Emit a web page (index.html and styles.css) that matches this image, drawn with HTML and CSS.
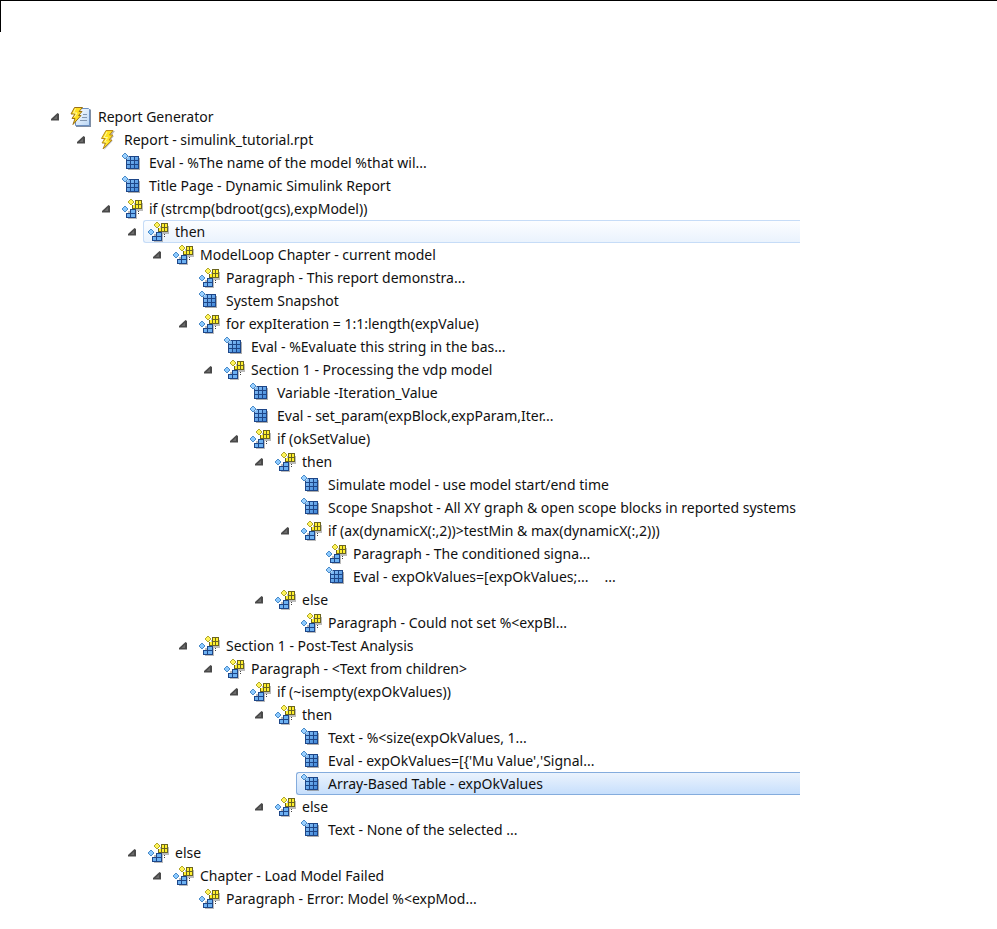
FILE: index.html
```
<!DOCTYPE html>
<html lang="en">
<head>
<meta charset="utf-8">
<title>Report Generator</title>
<link rel="stylesheet" href="styles.css">
</head>
<body>
<svg class="symbols" aria-hidden="true">
  <defs>
    <linearGradient id="page-fill" x2="1" y2="1"><stop stop-color="#fff"/><stop offset="1" stop-color="#b9d6f5"/></linearGradient>
    <linearGradient id="blue-fill" x2="1" y2="1"><stop stop-color="#8cc4f8"/><stop offset="1" stop-color="#3f86d8"/></linearGradient>
    <symbol id="arrow" viewBox="0 0 10 10"><path d="M7.500 1L9 2v6.500H1V7z" fill="#4a4a4a"/><path d="M7 3.500V7H3.500z" fill="#6c6c6c"/></symbol>
    <symbol id="bolt" viewBox="0 0 22 22">
      <path d="M10 2h8l-4 5h3l-4 4.500h3L7 21l2-6H6.500L9 10.500H6z" fill="#888" opacity=".6" transform="translate(1 0)"/>
      <path d="M10 1.500h7L13.500 6H17l-4 5h3L7 20l2.500-6H6l3-4.500H5.500z" fill="#ffe21f" stroke="#b88a1c"/>
      <path d="M11 3L8 8.500h3.500L8.500 13h3" fill="none" stroke="#fff7a0"/>
    </symbol>
    <symbol id="report" viewBox="0 0 22 22">
      <path d="M6 3h14l1 1v17H6z" fill="#7f8ea4"/>
      <path d="M5.500 2.500h13l1 1v16h-14z" fill="url(#page-fill)" stroke="#6b8fc0"/>
      <path d="M13 8.500h4M12 11.500h5M10 14.500h7" stroke="#8297b0"/>
      <path d="M4.500 1.500h8L9 5.500h3L8.500 9.500H11l-8 9 2-6H2L5 8H1z" fill="#ffdf20" stroke="#9b7014"/>
      <path d="M5.500 2.500L3.500 7H7L4.500 11" fill="none" stroke="#fff7a0"/>
    </symbol>
    <symbol id="component" viewBox="0 0 22 22">
      <path d="M7 6h12v12H7z" fill="#777" opacity=".6"/>
      <path d="M5 4h13v13H5z" fill="#1d4688"/>
      <path d="M6 5h3v3H6zM10 5h3v3h-3zM14 5h3v3h-3zM6 9h3v3H6zM10 9h3v3h-3zM14 9h3v3h-3zM6 13h3v3H6zM10 13h3v3h-3zM14 13h3v3h-3z" fill="url(#blue-fill)"/>
      <path d="M4 0l4 4-4 4-4-4z" fill="#fff"/>
      <path d="M4 1l3 3-3 3-3-3z" fill="#9bd0ff" stroke="#4a8bc8"/>
    </symbol>
    <symbol id="group" viewBox="0 0 22 22">
      <path d="M13 5h9v8h-8zM7 13h9v8H7z" fill="#777" opacity=".5"/>
      <path d="M14 2h7v9H11V7h3z" fill="#6b6520"/>
      <path d="M15 3h2v3h-2zM18 3h2v3h-2zM12 7h2v3h-2zM15 7h2v3h-2zM18 7h2v3h-2z" fill="#fff02e"/>
      <path d="M10 1l3 3-3 3-3-3z" fill="#fff45a" stroke="#b0a62c"/>
      <path d="M9 11h6v9H5v-5h4z" fill="#1d4688"/>
      <path d="M10 12h4v3h-4zM6 16h3v3H6zM10 16h4v3h-4z" fill="#6db1f2"/>
      <path d="M4 8l3 3-3 3-3-3z" fill="#8bc9ff" stroke="#4a8bc8"/>
      <path d="M17 13h1v1h-1zM17 15h1v1h-1z" fill="#444"/>
    </symbol>
  </defs>
</svg>
<main class="page">
<ul class="tree" role="tree" aria-label="Report outline">
<li class="row level-0" role="treeitem" aria-level="1"><button class="toggle" aria-label="Collapse"><svg><use href="#arrow"/></svg></button><span class="item"><svg class="icon"><use href="#report"/></svg><span>Report Generator</span></span></li>
<li class="row level-1" role="treeitem" aria-level="2"><button class="toggle" aria-label="Collapse"><svg><use href="#arrow"/></svg></button><span class="item"><svg class="icon"><use href="#bolt"/></svg><span>Report - simulink_tutorial.rpt</span></span></li>
<li class="row level-2" role="treeitem" aria-level="3"><span class="item"><svg class="icon"><use href="#component"/></svg><span>Eval - %The name of the model %that wil...</span></span></li>
<li class="row level-2" role="treeitem" aria-level="3"><span class="item"><svg class="icon"><use href="#component"/></svg><span>Title Page - Dynamic Simulink Report</span></span></li>
<li class="row level-2" role="treeitem" aria-level="3"><button class="toggle" aria-label="Collapse"><svg><use href="#arrow"/></svg></button><span class="item"><svg class="icon"><use href="#group"/></svg><span>if (strcmp(bdroot(gcs),expModel))</span></span></li>
<li class="row level-3" role="treeitem" aria-level="4"><button class="toggle" aria-label="Collapse"><svg><use href="#arrow"/></svg></button><span class="item hovered"><svg class="icon"><use href="#group"/></svg><span>then</span></span></li>
<li class="row level-4" role="treeitem" aria-level="5"><button class="toggle" aria-label="Collapse"><svg><use href="#arrow"/></svg></button><span class="item"><svg class="icon"><use href="#group"/></svg><span>ModelLoop Chapter - current model</span></span></li>
<li class="row level-5" role="treeitem" aria-level="6"><span class="item"><svg class="icon"><use href="#group"/></svg><span>Paragraph - This report demonstra...</span></span></li>
<li class="row level-5" role="treeitem" aria-level="6"><span class="item"><svg class="icon"><use href="#component"/></svg><span>System Snapshot</span></span></li>
<li class="row level-5" role="treeitem" aria-level="6"><button class="toggle" aria-label="Collapse"><svg><use href="#arrow"/></svg></button><span class="item"><svg class="icon"><use href="#group"/></svg><span>for expIteration = 1:1:length(expValue)</span></span></li>
<li class="row level-6" role="treeitem" aria-level="7"><span class="item"><svg class="icon"><use href="#component"/></svg><span>Eval - %Evaluate this string in the bas...</span></span></li>
<li class="row level-6" role="treeitem" aria-level="7"><button class="toggle" aria-label="Collapse"><svg><use href="#arrow"/></svg></button><span class="item"><svg class="icon"><use href="#group"/></svg><span>Section 1 - Processing the vdp model</span></span></li>
<li class="row level-7" role="treeitem" aria-level="8"><span class="item"><svg class="icon"><use href="#component"/></svg><span>Variable -Iteration_Value</span></span></li>
<li class="row level-7" role="treeitem" aria-level="8"><span class="item"><svg class="icon"><use href="#component"/></svg><span>Eval - set_param(expBlock,expParam,Iter...</span></span></li>
<li class="row level-7" role="treeitem" aria-level="8"><button class="toggle" aria-label="Collapse"><svg><use href="#arrow"/></svg></button><span class="item"><svg class="icon"><use href="#group"/></svg><span>if (okSetValue)</span></span></li>
<li class="row level-8" role="treeitem" aria-level="9"><button class="toggle" aria-label="Collapse"><svg><use href="#arrow"/></svg></button><span class="item"><svg class="icon"><use href="#group"/></svg><span>then</span></span></li>
<li class="row level-9" role="treeitem" aria-level="10"><span class="item"><svg class="icon"><use href="#component"/></svg><span>Simulate model - use model start/end time</span></span></li>
<li class="row level-9" role="treeitem" aria-level="10"><span class="item"><svg class="icon"><use href="#component"/></svg><span>Scope Snapshot - All XY graph &amp; open scope blocks in reported systems</span></span></li>
<li class="row level-9" role="treeitem" aria-level="10"><button class="toggle" aria-label="Collapse"><svg><use href="#arrow"/></svg></button><span class="item"><svg class="icon"><use href="#group"/></svg><span>if (ax(dynamicX(:,2))&gt;testMin &amp; max(dynamicX(:,2)))</span></span></li>
<li class="row level-10" role="treeitem" aria-level="11"><span class="item"><svg class="icon"><use href="#group"/></svg><span>Paragraph - The conditioned signa...</span></span></li>
<li class="row level-10" role="treeitem" aria-level="11"><span class="item"><svg class="icon"><use href="#component"/></svg><span>Eval - expOkValues=[expOkValues;...</span><span class="more">...</span></span></li>
<li class="row level-8" role="treeitem" aria-level="9"><button class="toggle" aria-label="Collapse"><svg><use href="#arrow"/></svg></button><span class="item"><svg class="icon"><use href="#group"/></svg><span>else</span></span></li>
<li class="row level-9" role="treeitem" aria-level="10"><span class="item"><svg class="icon"><use href="#group"/></svg><span>Paragraph - Could not set %&lt;expBl...</span></span></li>
<li class="row level-5" role="treeitem" aria-level="6"><button class="toggle" aria-label="Collapse"><svg><use href="#arrow"/></svg></button><span class="item"><svg class="icon"><use href="#group"/></svg><span>Section 1 - Post-Test Analysis</span></span></li>
<li class="row level-6" role="treeitem" aria-level="7"><button class="toggle" aria-label="Collapse"><svg><use href="#arrow"/></svg></button><span class="item"><svg class="icon"><use href="#group"/></svg><span>Paragraph - &lt;Text from children&gt;</span></span></li>
<li class="row level-7" role="treeitem" aria-level="8"><button class="toggle" aria-label="Collapse"><svg><use href="#arrow"/></svg></button><span class="item"><svg class="icon"><use href="#group"/></svg><span>if (~isempty(expOkValues))</span></span></li>
<li class="row level-8" role="treeitem" aria-level="9"><button class="toggle" aria-label="Collapse"><svg><use href="#arrow"/></svg></button><span class="item"><svg class="icon"><use href="#group"/></svg><span>then</span></span></li>
<li class="row level-9" role="treeitem" aria-level="10"><span class="item"><svg class="icon"><use href="#component"/></svg><span>Text - %&lt;size(expOkValues, 1...</span></span></li>
<li class="row level-9" role="treeitem" aria-level="10"><span class="item"><svg class="icon"><use href="#component"/></svg><span>Eval - expOkValues=[{'Mu Value','Signal...</span></span></li>
<li class="row level-9" role="treeitem" aria-level="10" aria-selected="true"><span class="item selected"><svg class="icon"><use href="#component"/></svg><span>Array-Based Table - expOkValues</span></span></li>
<li class="row level-8" role="treeitem" aria-level="9"><button class="toggle" aria-label="Collapse"><svg><use href="#arrow"/></svg></button><span class="item"><svg class="icon"><use href="#group"/></svg><span>else</span></span></li>
<li class="row level-9" role="treeitem" aria-level="10"><span class="item"><svg class="icon"><use href="#component"/></svg><span>Text - None of the selected ...</span></span></li>
<li class="row level-3" role="treeitem" aria-level="4"><button class="toggle" aria-label="Collapse"><svg><use href="#arrow"/></svg></button><span class="item"><svg class="icon"><use href="#group"/></svg><span>else</span></span></li>
<li class="row level-4" role="treeitem" aria-level="5"><button class="toggle" aria-label="Collapse"><svg><use href="#arrow"/></svg></button><span class="item"><svg class="icon"><use href="#group"/></svg><span>Chapter - Load Model Failed</span></span></li>
<li class="row level-5" role="treeitem" aria-level="6"><span class="item"><svg class="icon"><use href="#group"/></svg><span>Paragraph - Error: Model %&lt;expMod...</span></span></li>
</ul>
</main>
</body>
</html>
```
FILE: styles.css
```
* { box-sizing: border-box; }

body {
  margin: 0;
  background: #fff;
  color: #111;
  font: 14px/20px "Noto Sans", "Open Sans", sans-serif;
}

.symbols {
  position: absolute;
  width: 0;
  height: 0;
}

.page {
  padding: 104px 0 16px 50px;
  border-top: 1px solid #000;
  background: linear-gradient(#000, #000) 0 0 / 1px 31px no-repeat;
}

.tree {
  max-width: 750px;
  margin: 0;
  padding: 0;
  list-style: none;
}

.row {
  display: flex;
  align-items: stretch;
  height: 23px;
}

.toggle {
  display: flex;
  align-items: flex-start;
  flex: none;
  width: 16px;
  margin-right: -16px;
  padding: 7px 0 0;
  border: 0;
  background: none;
}

.toggle svg {
  display: block;
  width: 10px;
  height: 10px;
}

.item {
  display: flex;
  flex: 1;
  align-items: center;
  margin-left: 16px;
  padding-left: 3px;
  border: 1px solid transparent;
  border-width: 1px 0 1px 1px;
  border-radius: 3px 0 0 3px;
  white-space: nowrap;
}

.icon {
  flex: none;
  width: 22px;
  height: 22px;
  margin-right: 6px;
}

.more { margin-left: 16px; }

.hovered {
  border-color: #c6dcf7;
  background: linear-gradient(#fcfdff, #eaf3fd);
}

.selected {
  border-color: #84acdd;
  background: linear-gradient(#ebf3fd, #c7dffc);
}

.level-1 { padding-left: 26px; }
.level-2 { padding-left: 51px; }
.level-3 { padding-left: 77px; }
.level-4 { padding-left: 102px; }
.level-5 { padding-left: 128px; }
.level-6 { padding-left: 153px; }
.level-7 { padding-left: 179px; }
.level-8 { padding-left: 204px; }
.level-9 { padding-left: 230px; }
.level-10 { padding-left: 255px; }
```
